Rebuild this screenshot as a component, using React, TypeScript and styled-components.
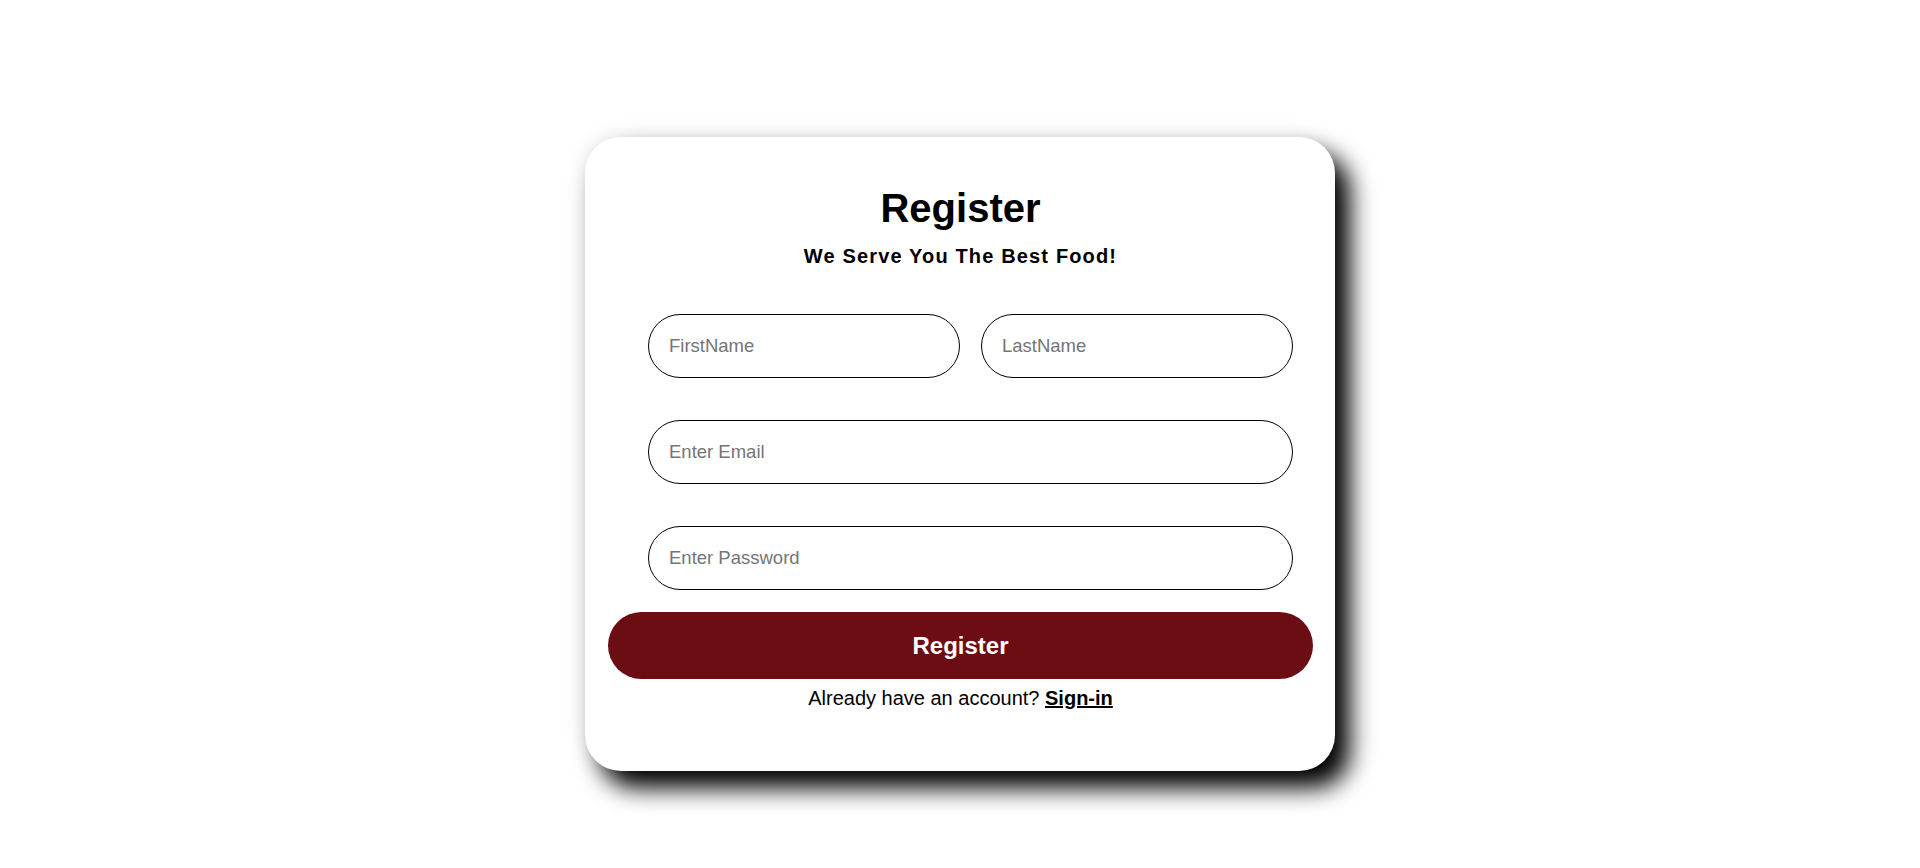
import React from "react";
import styled, { createGlobalStyle } from "styled-components";

const GlobalStyle = createGlobalStyle`
  html, body {
    margin: 0;
    padding: 0;
    background: #ffffff;
    font-family: "Liberation Sans", Arial, sans-serif;
  }
  * { box-sizing: border-box; }
`;

const Page = styled.div`
  min-height: 868px;
  display: flex;
  justify-content: center;
  align-items: flex-start;
  padding-top: 137px;
`;

const Card = styled.form`
  width: 750px;
  background: #ffffff;
  border-radius: 36px;
  padding: 48px 22px 61px 23px;
  display: flex;
  flex-direction: column;
  align-items: stretch;
  box-shadow: 0 0 22px rgba(0, 0, 0, 0.1), 15px 17px 24px #000000;
`;

const Title = styled.h1`
  margin: 0;
  font-size: 40px;
  line-height: 46px;
  font-weight: 700;
  color: #000;
  text-align: center;
`;

const Subtitle = styled.p`
  margin: 14px 0 0;
  font-size: 20px;
  line-height: 23px;
  font-weight: 700;
  letter-spacing: 1.15px;
  color: #000;
  text-align: center;
`;

const Fields = styled.div`
  margin-top: 46px;
  padding: 0 20px 0 40px;
  display: flex;
  flex-direction: column;
  gap: 42px;
`;

const NameRow = styled.div`
  display: grid;
  grid-template-columns: 1fr 1fr;
  gap: 21px;
`;

const Input = styled.input`
  width: 100%;
  height: 64px;
  border: 1px solid #000;
  border-radius: 32px;
  padding: 0 20px;
  font-family: "Liberation Sans", Arial, sans-serif;
  font-size: 18.5px;
  color: #000;
  background: #fff;
  outline: none;
  &::placeholder {
    color: #757575;
  }
`;

const SubmitButton = styled.button`
  margin-top: 22px;
  width: 100%;
  height: 67px;
  border: none;
  border-radius: 34px;
  background: #6b0d13;
  color: #ffffff;
  font-family: "Liberation Sans", Arial, sans-serif;
  font-size: 24px;
  font-weight: 700;
  cursor: pointer;
`;

const Footer = styled.p`
  margin: 8px 0 0;
  font-size: 20px;
  line-height: 23px;
  color: #000;
  text-align: center;
`;

const SignInLink = styled.a`
  font-weight: 700;
  color: #000;
  text-decoration: underline;
`;

export default function App() {
  return (
    <>
      <GlobalStyle />
      <Page>
        <Card onSubmit={(e) => e.preventDefault()}>
          <Title>Register</Title>
          <Subtitle>We Serve You The Best Food!</Subtitle>
          <Fields>
            <NameRow>
              <Input type="text" placeholder="FirstName" />
              <Input type="text" placeholder="LastName" />
            </NameRow>
            <Input type="email" placeholder="Enter Email" />
            <Input type="password" placeholder="Enter Password" />
          </Fields>
          <SubmitButton type="submit">Register</SubmitButton>
          <Footer>
            Already have an account? <SignInLink href="#">Sign-in</SignInLink>
          </Footer>
        </Card>
      </Page>
    </>
  );
}
